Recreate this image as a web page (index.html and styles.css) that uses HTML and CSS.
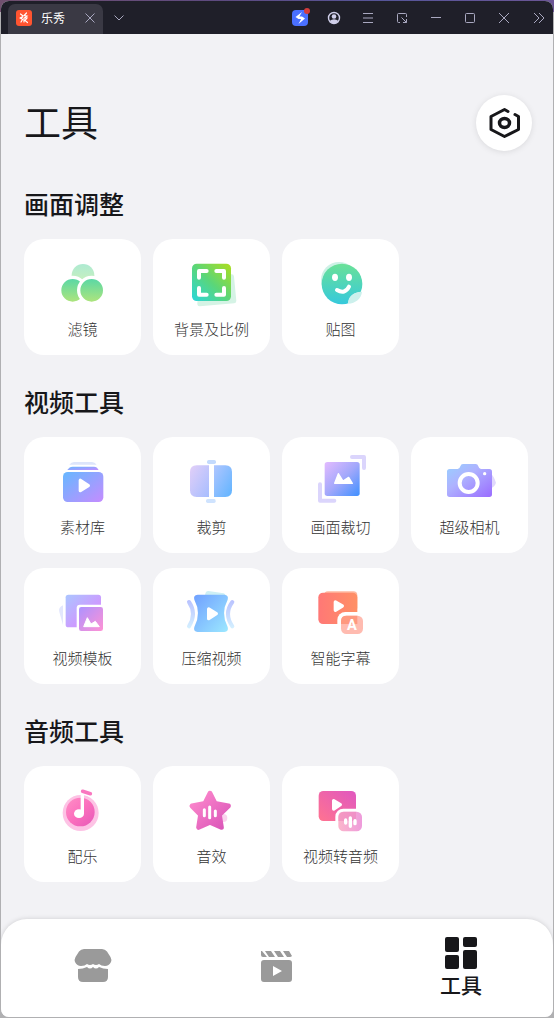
FILE: index.html
```html
<!DOCTYPE html>
<html lang="zh-CN">
<head>
    <meta charset="utf-8">
    <title>乐秀</title>
    <link rel="stylesheet" href="styles.css">
</head>
<body>
    <div class="window">
        <div class="titlebar">
            <div class="app-tab">
                <svg class="app-logo" width="16" height="16" viewBox="0 0 16 16">
                    <rect width="16" height="16" rx="3" fill="#ff5430"/>
                    <path d="M4.500 4l2 1.500M4 8l3-1.500L5 8.500l1.500 1L5 12M10.500 3L8 5.500l3 .5-2.500 2h2.500L9 10.500l2.500 2M8 9v3" fill="none" stroke="#fff" stroke-width="1.200" stroke-linecap="round"/>
                </svg>
                <span class="app-name">乐秀</span>
                <button type="button" class="tab-close" aria-label="关闭标签">
                    <svg width="10" height="10" viewBox="0 0 10 10"><path d="M.5.5l9 9M9.500.5l-9 9"/></svg>
                </button>
            </div>
            <button type="button" class="tab-list" aria-label="标签列表">
                <svg width="10" height="6" viewBox="0 0 10 6"><path d="M.5.5L5 5 9.500.5"/></svg>
            </button>
            <div class="window-buttons">
                <button type="button" aria-label="加速">
                    <svg width="20" height="20" viewBox="0 0 20 20">
                        <rect x="2" y="2" width="16" height="16" rx="4" fill="#4a70ff" stroke="none"/>
                        <path d="M12 4L5.500 9l3 2h2.600L8.500 16l6.500-5.500-3-2H9.400z" fill="#fff" stroke="none"/>
                        <circle cx="17" cy="3" r="3" fill="#d23c3c" stroke="none"/>
                    </svg>
                </button>
                <button type="button" aria-label="账号">
                    <svg width="14" height="14" viewBox="0 0 14 14">
                        <circle cx="7" cy="7" r="5.500" fill="none" stroke="#d0cfea" stroke-width="1.400"/>
                        <circle cx="7" cy="5.500" r="2.300" fill="#d0cfea" stroke="none"/>
                        <path d="M2.500 10Q7 6.500 11.500 10Q7 15 2.500 10z" fill="#d0cfea" stroke="none"/>
                    </svg>
                </button>
                <button type="button" aria-label="菜单">
                    <svg width="12" height="12" viewBox="0 0 12 12"><path d="M1 1.500h10M1 6h10M1 10.500h10"/></svg>
                </button>
                <button type="button" aria-label="小窗">
                    <svg width="12" height="12" viewBox="0 0 12 12"><path d="M4 10.500H2.500q-1 0-1-1v-7q0-1 1-1h7q1 0 1 1V5M5.500 5.500l5 5M10.500 7v3.500H7"/></svg>
                </button>
                <button type="button" aria-label="最小化">
                    <svg width="12" height="12" viewBox="0 0 12 12"><path d="M1 5.500h10"/></svg>
                </button>
                <button type="button" aria-label="最大化">
                    <svg width="12" height="12" viewBox="0 0 12 12"><rect x="1.500" y="1.500" width="9" height="9" rx="1"/></svg>
                </button>
                <button type="button" aria-label="关闭">
                    <svg width="12" height="12" viewBox="0 0 12 12"><path d="M1 1l10 10M11 1L1 11"/></svg>
                </button>
                <button type="button" class="expand" aria-label="展开">
                    <svg width="12" height="12" viewBox="0 0 12 12"><path d="M1 1l5 5-5 5M6 1l5 5-5 5"/></svg>
                </button>
            </div>
        </div>

        <main class="content">
            <header class="page-header">
                <h1>工具</h1>
                <button type="button" class="settings" aria-label="设置">
                    <svg width="34" height="34" viewBox="0 0 34 34" fill="none" stroke="#17171a" stroke-width="3" stroke-linecap="round" stroke-linejoin="round">
                        <path d="M21 5.500L17.500 3.500 4 10.500v13L17.500 30.500 31.500 23.500V10.500L28 8.500"/>
                        <ellipse cx="17.500" cy="17" rx="5" ry="4.500" stroke-width="3.500"/>
                    </svg>
                </button>
            </header>

            <section>
                <h2>画面调整</h2>
                <div class="cards">
                    <button type="button" class="card">
                        <svg class="icon" viewBox="0 0 183 171">
                            <defs>
                                <linearGradient id="filter" x1="0" y1="0" x2="0" y2="1"><stop offset="0" stop-color="#55d7a8"/><stop offset="1" stop-color="#b3e57a"/></linearGradient>
                                <linearGradient id="filterTop" x1="0" y1="0" x2="0" y2="1"><stop offset="0" stop-color="#aeead2"/><stop offset="1" stop-color="#d0f2b8"/></linearGradient>
                            </defs>
                            <circle cx="93" cy="73" r="34" fill="url(#filterTop)"/>
                            <circle cx="62" cy="118" r="39" fill="url(#filter)" stroke="#fff" stroke-width="10"/>
                            <circle cx="119" cy="118" r="39" fill="url(#filter)" stroke="#fff" stroke-width="10"/>
                        </svg>
                        <span>滤镜</span>
                    </button>
                    <button type="button" class="card">
                        <svg class="icon" viewBox="0 0 183 171">
                            <defs><linearGradient id="ratio" x1="0" y1="1" x2="1" y2="0"><stop offset="0" stop-color="#2bd7dc"/><stop offset=".5" stop-color="#5bd678"/><stop offset="1" stop-color="#aede1c"/></linearGradient></defs>
                            <path d="M60 85l92-8 7 73-103 9z" fill="#d5f3e5" stroke="#d5f3e5" stroke-width="14" stroke-linejoin="round"/>
                            <rect x="33" y="38" width="117" height="112" rx="14" fill="url(#ratio)"/>
                            <path d="M77 60H54V80M106 60H129V80M54 111V131H77M129 111V131H106" fill="none" stroke="#fff" stroke-width="12" stroke-linecap="round" stroke-linejoin="round"/>
                        </svg>
                        <span>背景及比例</span>
                    </button>
                    <button type="button" class="card">
                        <svg class="icon" viewBox="0 0 183 171">
                            <defs><linearGradient id="sticker" x1="0" y1="0" x2="0" y2="1"><stop offset="0" stop-color="#6ae197"/><stop offset="1" stop-color="#36c9dc"/></linearGradient></defs>
                            <circle cx="87" cy="87" r="54" fill="#cdf1e6"/>
                            <circle cx="96" cy="99" r="61" fill="url(#sticker)"/>
                            <path d="M114 162C114 136 130 123 160 122L160 162z" fill="#fff"/>
                            <path d="M114 158C114 136 130 123 156 122C154 142 137 157 114 158z" fill="#ccf0ec"/>
                            <ellipse cx="75" cy="79" rx="9" ry="11" fill="#fff"/>
                            <ellipse cx="117" cy="79" rx="9" ry="11" fill="#fff"/>
                            <path d="M81 117Q105 131 117 107" fill="none" stroke="#fff" stroke-width="12" stroke-linecap="round"/>
                        </svg>
                        <span>贴图</span>
                    </button>
                </div>
            </section>

            <section>
                <h2>视频工具</h2>
                <div class="cards">
                    <button type="button" class="card">
                        <svg class="icon" viewBox="0 0 183 171">
                            <defs><linearGradient id="library" x1="0" y1="0" x2="1" y2="1"><stop offset="0" stop-color="#66b8ff"/><stop offset="1" stop-color="#c58cff"/></linearGradient></defs>
                            <path d="M52 47Q58 39 66 39H120Q128 39 134 47z" fill="#dde5fb"/>
                            <path d="M46 63Q52 53 62 53H126Q135 53 140 63z" fill="url(#library)"/>
                            <rect x="33" y="69" width="121" height="90" rx="14" fill="url(#library)"/>
                            <path d="M85 94v31l24-15z" fill="#fff" stroke="#fff" stroke-width="10" stroke-linejoin="round"/>
                        </svg>
                        <span>素材库</span>
                    </button>
                    <button type="button" class="card">
                        <svg class="icon" viewBox="0 0 183 171">
                            <defs>
                                <linearGradient id="cutLeft" x1="0" y1="0" x2="1" y2="1"><stop offset="0" stop-color="#e2cff8"/><stop offset="1" stop-color="#a6bdff"/></linearGradient>
                                <linearGradient id="cutRight" x1="0" y1="0" x2="1" y2="1"><stop offset="0" stop-color="#b0c6ff"/><stop offset="1" stop-color="#60b4ff"/></linearGradient>
                            </defs>
                            <path d="M84 49H47Q27 49 27 69V124Q27 144 47 144H84z" fill="url(#cutLeft)"/>
                            <path d="M99 49H133Q153 49 153 69V124Q153 144 133 144H99z" fill="url(#cutRight)"/>
                            <rect x="78" y="33" width="27" height="12" rx="5" fill="#c3dafd"/>
                            <rect x="75" y="150" width="29" height="12" rx="5" fill="#cfe3fe"/>
                        </svg>
                        <span>裁剪</span>
                    </button>
                    <button type="button" class="card">
                        <svg class="icon" viewBox="0 0 183 171">
                            <defs><linearGradient id="crop" x1="0" y1="0" x2="1" y2="1"><stop offset="0" stop-color="#e3bbff"/><stop offset=".5" stop-color="#a3a8fb"/><stop offset="1" stop-color="#3f90ff"/></linearGradient></defs>
                            <path d="M126 24H162V57M30 106V155H73" fill="none" stroke="#dbd5fc" stroke-width="12" stroke-linecap="round" stroke-linejoin="round"/>
                            <rect x="44" y="39" width="105" height="102" rx="8" fill="url(#crop)"/>
                            <path d="M74 103L85 74 99 96 116 85 127 103z" fill="#fff" stroke="#fff" stroke-width="4" stroke-linejoin="round"/>
                        </svg>
                        <span>画面裁切</span>
                    </button>
                    <button type="button" class="card">
                        <svg class="icon" viewBox="0 0 183 171">
                            <defs><linearGradient id="camera" x1="0" y1="0" x2="1" y2="1"><stop offset="0" stop-color="#98d0ff"/><stop offset=".4" stop-color="#aeb2ff"/><stop offset="1" stop-color="#9a6cff"/></linearGradient></defs>
                            <path d="M156 76Q163 78 171 101Q168 112 156 118z" fill="#e0d8fd"/>
                            <path d="M32 60H56Q62 60 64 52Q66 45 72 45H110Q116 45 118 52Q120 60 126 60H151Q159 60 159 68V136Q159 144 151 144H32Q24 144 24 136V68Q24 60 32 60z" fill="url(#camera)"/>
                            <circle cx="89" cy="102" r="27" fill="none" stroke="#fff" stroke-width="12"/>
                            <circle cx="137" cy="74" r="5" fill="#fff"/>
                        </svg>
                        <span>超级相机</span>
                    </button>
                    <button type="button" class="card">
                        <svg class="icon" viewBox="0 0 183 171">
                            <defs>
                                <linearGradient id="template" x1="0" y1="0" x2="1" y2="1"><stop offset="0" stop-color="#abc6ff"/><stop offset=".6" stop-color="#cc9bff"/><stop offset="1" stop-color="#cc9bff"/></linearGradient>
                                <linearGradient id="templateFront" x1="0" y1="0" x2="1" y2="1"><stop offset="0" stop-color="#ad92ff"/><stop offset="1" stop-color="#ff92d4"/></linearGradient>
                            </defs>
                            <path d="M33 76Q18 82 22 96L33 135z" fill="#e3e7fd"/>
                            <rect x="41" y="44" width="106" height="98" rx="8" fill="url(#template)"/>
                            <path d="M74 150V84Q74 74 84 74H155V150z" fill="#fff"/>
                            <rect x="81" y="81" width="72" height="72" rx="7" fill="url(#templateFront)"/>
                            <path d="M95 140L106 113 117 132 130 124 142 140z" fill="#fff" stroke="#fff" stroke-width="3" stroke-linejoin="round"/>
                        </svg>
                        <span>视频模板</span>
                    </button>
                    <button type="button" class="card">
                        <svg class="icon" viewBox="0 0 183 171">
                            <defs>
                                <linearGradient id="compress" x1="0" y1="0" x2="1" y2="1"><stop offset="0" stop-color="#70a0ff"/><stop offset="1" stop-color="#9ce8ff"/></linearGradient>
                                <linearGradient id="squeeze" x1="0" y1="60" x2="0" y2="145" gradientUnits="userSpaceOnUse"><stop offset="0" stop-color="#b9c2ff"/><stop offset="1" stop-color="#d4f0ff"/></linearGradient>
                            </defs>
                            <path d="M72 46Q73 33 82 33L128 40Q134 42 134 48z" fill="#cdeff5"/>
                            <path d="M50 44H130Q144 45 140 59Q118 100 140 141Q144 155 130 156H50Q36 155 40 141Q62 100 40 59Q36 45 50 44z" fill="url(#compress)"/>
                            <path d="M24 66Q48 101 24 139M154 66Q128 101 154 139" fill="none" stroke="url(#squeeze)" stroke-width="12" stroke-linecap="round"/>
                            <path d="M83 87v29l23-15z" fill="#fff" stroke="#fff" stroke-width="10" stroke-linejoin="round"/>
                        </svg>
                        <span>压缩视频</span>
                    </button>
                    <button type="button" class="card">
                        <svg class="icon" viewBox="0 0 183 171">
                            <defs><linearGradient id="caption" x1="0" y1="0" x2="1" y2="0"><stop offset="0" stop-color="#ff7876"/><stop offset="1" stop-color="#ff9065"/></linearGradient></defs>
                            <rect x="42" y="34" width="100" height="60" rx="12" fill="#ffb9a0"/>
                            <rect x="25" y="38" width="117" height="94" rx="14" fill="url(#caption)"/>
                            <rect x="82" y="96" width="86" height="75" rx="24" fill="#fff"/>
                            <rect x="93" y="107" width="66" height="55" rx="16" fill="#ffbbb0"/>
                            <path d="M93 132V123Q93 107 109 107H142V132z" fill="#ff9980"/>
                            <path d="M76 66v25l21-13z" fill="#fff" stroke="#fff" stroke-width="10" stroke-linejoin="round"/>
                            <text class="caption-letter" x="126" y="149">A</text>
                        </svg>
                        <span>智能字幕</span>
                    </button>
                </div>
            </section>

            <section>
                <h2>音频工具</h2>
                <div class="cards">
                    <button type="button" class="card">
                        <svg class="icon" viewBox="0 0 183 171">
                            <defs><linearGradient id="music" x1="0" y1="0" x2="1" y2="1"><stop offset="0" stop-color="#ff8fc6"/><stop offset=".5" stop-color="#fb6fbd"/><stop offset="1" stop-color="#e658b8"/></linearGradient></defs>
                            <circle cx="86" cy="105" r="54" fill="#fdc3e5"/>
                            <circle cx="85" cy="102" r="43" fill="url(#music)"/>
                            <path d="M91 46V107" stroke="#fff" stroke-width="10"/>
                            <ellipse cx="81" cy="107" rx="15" ry="13" fill="#fff"/>
                            <path d="M92 40L115 47" stroke="#f978c0" stroke-width="11" stroke-linecap="round"/>
                        </svg>
                        <span>配乐</span>
                    </button>
                    <button type="button" class="card">
                        <svg class="icon" viewBox="0 0 183 171">
                            <defs><linearGradient id="effect" x1="0" y1="0" x2="1" y2="1"><stop offset="0" stop-color="#ff8bcd"/><stop offset="1" stop-color="#d954b8"/></linearGradient></defs>
                            <circle cx="127" cy="120" r="12" fill="#fad3ee"/>
                            <path d="M87 46L102 76 142 84 115 110 121 148 87 133 53 148 59 110 33 84 72 76z" fill="url(#effect)" stroke="url(#effect)" stroke-width="15" stroke-linejoin="round"/>
                            <path d="M70 95V113M86 87V119M103 99V113" stroke="#fff" stroke-width="9" stroke-linecap="round"/>
                        </svg>
                        <span>音效</span>
                    </button>
                    <button type="button" class="card">
                        <svg class="icon" viewBox="0 0 183 171">
                            <defs>
                                <linearGradient id="convert" x1="0" y1="1" x2="1" y2="0"><stop offset="0" stop-color="#ff7390"/><stop offset="1" stop-color="#e058c0"/></linearGradient>
                                <linearGradient id="convertBadge" x1="0" y1="0" x2="1" y2="0"><stop offset="0" stop-color="#fbb6cb"/><stop offset="1" stop-color="#ee9bdb"/></linearGradient>
                            </defs>
                            <rect x="26" y="39" width="112" height="90" rx="14" fill="url(#convert)"/>
                            <rect x="76" y="92" width="88" height="76" rx="24" fill="#fff"/>
                            <rect x="85" y="101" width="71" height="59" rx="16" fill="url(#convertBadge)"/>
                            <path d="M85 129V117Q85 101 101 101H138V129z" fill="#ee7db8" fill-opacity=".5"/>
                            <path d="M71 68v25l20-13z" fill="#fff" stroke="#fff" stroke-width="10" stroke-linejoin="round"/>
                            <path d="M107 126V135M121 120V145M135 128V137" stroke="#fff" stroke-width="10" stroke-linecap="round"/>
                        </svg>
                        <span>视频转音频</span>
                    </button>
                </div>
            </section>
        </main>

        <nav class="tabbar">
            <a href="#shop" aria-label="素材商店">
                <svg width="38" height="36" viewBox="0 0 38 36" fill="#9a9a9a">
                    <path d="M10 1H28Q31 1 33 3.500L36.500 9Q38 12 37 14Q35 18 31 18Q27 18 25 16Q22 18 19 16Q16 18 13 16Q11 18 7 18Q3 18 1 14Q0 12 1.500 9L5 3.500Q7 1 10 1z"/>
                    <path d="M4 21Q9 21 13 19Q16 22 19 19Q22 22 25 19Q29 21 34 21V29Q34 34 29 34H9Q4 34 4 29z"/>
                </svg>
            </a>
            <a href="#edit" aria-label="剪辑">
                <svg width="36" height="36" viewBox="0 0 36 36" fill="#9a9a9a">
                    <path d="M3 3L8 9H4Q2 9 2 7V3zM6 3H12L16 9H10zM15 3H21L25 9H19zM24 3H30L33 8Q32 9 31 9H28z"/>
                    <path fill-rule="evenodd" d="M5 12H30Q33 12 33 15V31Q33 34 30 34H5Q2 34 2 31V15Q2 12 5 12zM14 18V28L23 23z"/>
                </svg>
            </a>
            <a href="#tools" class="active">
                <svg width="36" height="36" viewBox="0 0 36 36" fill="#17171a">
                    <rect x="2" y="2" width="14" height="15" rx="2"/>
                    <rect x="20" y="2" width="14" height="10" rx="2"/>
                    <rect x="2" y="20" width="14" height="14" rx="2"/>
                    <rect x="20" y="15" width="14" height="19" rx="2"/>
                </svg>
                <span>工具</span>
            </a>
        </nav>
    </div>
</body>
</html>
```
FILE: styles.css
```css
* {
    box-sizing: border-box;
}
body {
    margin: 0;
    padding: 1px;
    min-height: 100vh;
    display: flex;
    font-family: "Noto Sans CJK SC", sans-serif;
    color: #17171a;
    background: linear-gradient(90deg, #71506f, #5d4a80 40%, #56569a 70%, #6b5595) top / 100% 12px no-repeat #b0b0b2;
}
button {
    padding: 0;
    border: none;
    background: none;
    font-family: inherit;
    color: inherit;
    cursor: pointer;
}
svg {
    display: block;
    flex: none;
}
.window {
    flex: 1;
    display: flex;
    flex-direction: column;
    background-color: #f2f2f5;
    border-radius: 8px;
    overflow: hidden;
}

/* title bar */
.titlebar {
    display: flex;
    align-items: center;
    height: 33px;
    background-color: #1f1f29;
}
.titlebar button svg {
    fill: none;
    stroke: #a9a8c0;
}
.app-tab {
    display: flex;
    align-items: center;
    align-self: flex-end;
    width: 95px;
    height: 30px;
    margin-left: 7px;
    padding: 0 8px 2px 8px;
    background-color: #3a3944;
    border-radius: 7px 7px 0 0;
}
.app-name {
    flex: 1;
    margin-left: 9px;
    font-size: 12px;
    line-height: 16px;
    color: #fff;
}
.tab-list {
    margin-left: 11px;
}
.window-buttons {
    display: flex;
    margin-left: auto;
}
.window-buttons button {
    display: flex;
    align-items: center;
    justify-content: center;
    width: 34px;
    height: 32px;
}
.window-buttons .expand {
    width: 32px;
    padding-left: 4px;
}

/* content */
.content {
    flex: 1;
    padding: 61px 25px 37px 23px;
}
.page-header {
    display: flex;
    justify-content: space-between;
    align-items: center;
    margin-bottom: 34px;
}
h1 {
    margin: 0;
    padding-bottom: 4px;
    font-size: 37px;
    font-weight: 400;
    line-height: 52px;
}
.settings {
    display: flex;
    align-items: center;
    justify-content: center;
    width: 56px;
    height: 56px;
    margin-right: -4px;
    background-color: #fff;
    border-radius: 50%;
    box-shadow: 0 1px 6px rgba(0, 0, 0, 0.1);
}
section + section {
    margin-top: 28px;
}
h2 {
    margin: 0 0 18px;
    font-size: 25px;
    font-weight: 500;
    line-height: 36px;
}
.cards {
    display: grid;
    grid-template-columns: repeat(4, 1fr);
    gap: 15px 12px;
}
.card {
    display: flex;
    flex-direction: column;
    align-items: center;
    height: 116px;
    padding-top: 12px;
    background-color: #fff;
    border-radius: 20px;
}
.icon {
    width: 61px;
    height: 57px;
}
.card span {
    margin-top: 10px;
    font-size: 15px;
    font-weight: 300;
    line-height: 22px;
    color: #333;
}
.caption-letter {
    font-family: Roboto, sans-serif;
    font-size: 44px;
    font-weight: 700;
    text-anchor: middle;
    fill: #fff;
}

/* bottom navigation */
.tabbar {
    display: flex;
    height: 98px;
    padding-bottom: 4px;
    background-color: #fff;
    border-radius: 26px 26px 0 0;
    box-shadow: 0 0 5px rgba(0, 0, 0, 0.15);
}
.tabbar a {
    flex: 1;
    display: flex;
    flex-direction: column;
    align-items: center;
    justify-content: center;
    color: #17171a;
    text-decoration: none;
}
.tabbar span {
    font-size: 21px;
    font-weight: 500;
    line-height: 26px;
}
```
